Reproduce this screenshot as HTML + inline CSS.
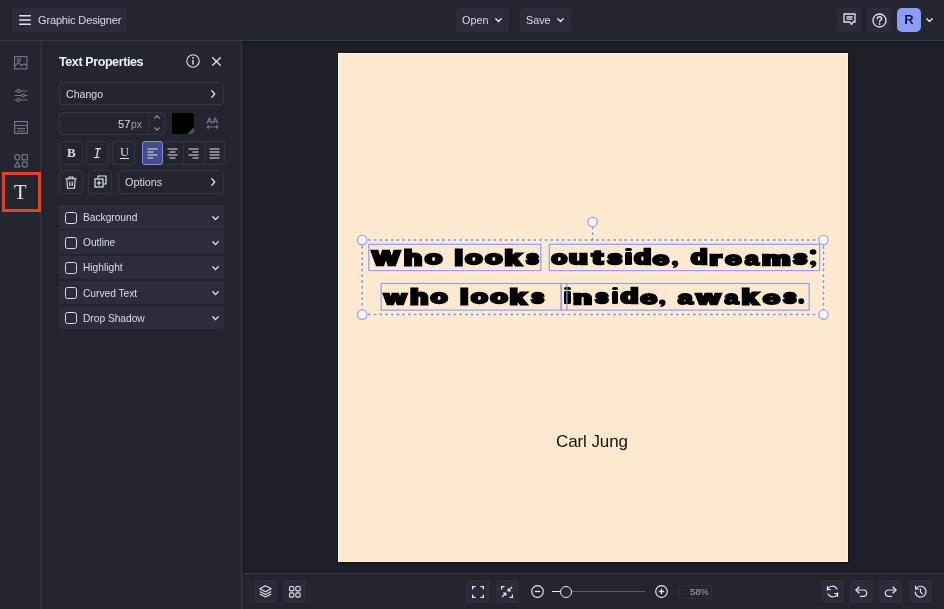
<!DOCTYPE html>
<html><head><meta charset="utf-8">
<style>
*{box-sizing:border-box;margin:0;padding:0}
html,body{-webkit-font-smoothing:antialiased;width:944px;height:609px;overflow:hidden;background:#1d1e27;font-family:"Liberation Sans",sans-serif;position:relative}
.abs{position:absolute}
#top{left:0;top:0;width:944px;height:41px;background:#23252f;border-bottom:1px solid #353744;box-shadow:0 2px 5px rgba(0,0,0,0.35)}
#rail{left:0;top:41px;width:42px;height:568px;background:#23252f;border-right:2px solid #2c2e3a}
#panel{left:42px;top:41px;width:200px;height:568px;background:#23252f;border-right:1px solid #353744}
#bottom{left:242px;top:573px;width:702px;height:36px;background:#23252f;border-top:1px solid #353744}
#canvas{left:338px;top:52.6px;width:509.7px;height:509px;background:#fde8d0;box-shadow:0 0 1.5px 0.5px #000, inset 0 0 0 1px #fff1e0}
.btn{position:absolute;background:#2a2c39;border-radius:2.5px}
.box{position:absolute;border:1px solid #31333f;border-radius:3px}
.g{position:absolute;left:0;top:0;transform-origin:0 0;font:700 19px "Liberation Sans",sans-serif;line-height:30px;-webkit-text-stroke:2.6px #000;color:#000;white-space:pre}
.lbl{position:absolute;will-change:transform;color:#dcdde5;white-space:nowrap}
svg{position:absolute;overflow:visible}
</style></head><body>
<div id="top" class="abs"></div>
<div id="rail" class="abs"></div>
<div id="panel" class="abs"></div>
<div id="bottom" class="abs"></div>
<div id="canvas" class="abs"></div>

<!-- top bar -->
<div class="btn" style="left:12px;top:8px;width:115px;height:24px"></div>
<svg style="left:19px;top:15px" width="12" height="10" viewBox="0 0 12 10"><g stroke="#e4e5ec" stroke-width="1.5" stroke-linecap="round"><path d="M0.75 0.75H11.25M0.75 5H11.25M0.75 9.25H11.25"/></g></svg>
<div class="lbl" style="left:38px;top:13px;font-size:11px;letter-spacing:-0.15px;line-height:14px">Graphic Designer</div>
<div class="btn" style="left:456px;top:8px;width:53px;height:24px"></div>
<div class="lbl" style="left:462px;top:13px;font-size:10.8px;line-height:14px">Open</div>
<svg style="left:495px;top:18px" width="7" height="5" viewBox="0 0 7 5"><path d="M0.8 0.8L3.5 3.6L6.2 0.8" fill="none" stroke="#e4e5ec" stroke-width="1.4" stroke-linecap="round" stroke-linejoin="round"/></svg>
<div class="btn" style="left:520px;top:8px;width:51px;height:24px"></div>
<div class="lbl" style="left:526px;top:13px;font-size:10.8px;line-height:14px">Save</div>
<svg style="left:557px;top:18px" width="7" height="5" viewBox="0 0 7 5"><path d="M0.8 0.8L3.5 3.6L6.2 0.8" fill="none" stroke="#e4e5ec" stroke-width="1.4" stroke-linecap="round" stroke-linejoin="round"/></svg>
<div class="btn" style="left:837px;top:8px;width:24px;height:24px"></div>
<svg style="left:843px;top:13px" width="13" height="13" viewBox="0 0 13 13"><path d="M1 1H12V9H10L8.5 11.5L7 9H1Z" fill="none" stroke="#e4e5ec" stroke-width="1.3" stroke-linejoin="round"/><path d="M3.5 4H9.5M3.5 6.2H9.5" stroke="#e4e5ec" stroke-width="1.3"/></svg>
<div class="btn" style="left:867px;top:8px;width:24px;height:24px"></div>
<svg style="left:871.5px;top:12.5px" width="15" height="15" viewBox="0 0 15 15"><circle cx="7.5" cy="7.5" r="6.5" fill="none" stroke="#e4e5ec" stroke-width="1.3"/><path d="M5.3 5.8C5.3 4.5 6.3 3.8 7.5 3.8C8.7 3.8 9.7 4.6 9.7 5.7C9.7 7.1 7.6 7.2 7.6 8.8" fill="none" stroke="#e4e5ec" stroke-width="1.4" stroke-linecap="round"/><circle cx="7.6" cy="11" r="0.9" fill="#e4e5ec"/></svg>
<div class="abs" style="left:897px;top:8px;width:24px;height:24px;background:#8e9cf7;border-radius:5px;color:#16193d;will-change:transform;font-weight:700;font-size:13px;line-height:24px;text-align:center">R</div>
<svg style="left:926px;top:17.5px" width="7" height="5" viewBox="0 0 7 5"><path d="M0.8 0.8L3.5 3.6L6.2 0.8" fill="none" stroke="#e4e5ec" stroke-width="1.4" stroke-linecap="round" stroke-linejoin="round"/></svg>

<!-- rail -->
<svg style="left:14px;top:56px" width="13.5" height="13.5" viewBox="0 0 14 14"><g fill="none" stroke="#727489" stroke-width="1.2"><rect x="0.6" y="0.6" width="12.8" height="12.8"/><path d="M0.6 10.5L4.5 7L8 10L10.5 8L13.4 10.5"/><circle cx="5" cy="4.2" r="1.6"/></g></svg>
<svg style="left:14px;top:89px" width="14" height="13" viewBox="0 0 14 13"><g fill="none" stroke="#727489" stroke-width="1.2"><path d="M0.5 2H3M6 2H13.5M0.5 6.5H7.5M10.5 6.5H13.5M0.5 11H3M6 11H13.5"/><circle cx="4.5" cy="2" r="1.5"/><circle cx="9" cy="6.5" r="1.5"/><circle cx="4.5" cy="11" r="1.5"/></g></svg>
<svg style="left:14px;top:121px" width="14" height="13" viewBox="0 0 14 13"><g fill="none" stroke="#727489" stroke-width="1.2"><rect x="0.6" y="0.6" width="12.8" height="11.8"/><path d="M0.6 4.5H13.4M3 7.5H11M3 10H11"/></g></svg>
<svg style="left:13.5px;top:154px" width="14" height="14" viewBox="0 0 14 14"><g fill="none" stroke="#727489" stroke-width="1.2"><circle cx="3.3" cy="3.3" r="2.6"/><rect x="8.2" y="0.7" width="5.2" height="5.2"/><path d="M3.3 7.8L6 12.8H0.6Z"/><circle cx="10.8" cy="10.5" r="2.6"/></g></svg>
<div class="abs" style="left:2px;top:172px;width:39px;height:40px;border:3px solid #e0412b"></div>
<div class="lbl" style="left:14px;top:181px;font-family:'Liberation Serif',serif;font-size:20.5px;line-height:22px;color:#e3e4ea">T</div>

<!-- panel -->
<div class="lbl" style="left:59px;top:54.5px;font-size:12.5px;font-weight:700;letter-spacing:-0.4px;line-height:15px;color:#f0f1f5">Text Properties</div>
<svg style="left:186px;top:54px" width="14" height="14" viewBox="0 0 14 14"><circle cx="7" cy="7" r="6.2" fill="none" stroke="#e4e5ec" stroke-width="1.1"/><path d="M7 6V10.5" stroke="#e4e5ec" stroke-width="1.4"/><circle cx="7" cy="3.9" r="0.9" fill="#e4e5ec"/></svg>
<svg style="left:212px;top:57px" width="9" height="9" viewBox="0 0 9 9"><path d="M0.7 0.7L8.3 8.3M8.3 0.7L0.7 8.3" stroke="#e4e5ec" stroke-width="1.3" stroke-linecap="round"/></svg>
<div class="box" style="left:59px;top:82px;width:165px;height:23px"></div>
<div class="lbl" style="left:66px;top:87px;font-size:10.6px;line-height:14px">Chango</div>
<svg style="left:210.5px;top:89.5px" width="5" height="8" viewBox="0 0 5 8"><path d="M0.8 0.8L3.8 4L0.8 7.2" fill="none" stroke="#e4e5ec" stroke-width="1.3" stroke-linecap="round" stroke-linejoin="round"/></svg>
<div class="box" style="left:59px;top:111.5px;width:106px;height:23.5px"></div>
<div class="abs" style="left:148px;top:112px;width:1px;height:22.5px;background:#30323e"></div>
<div class="lbl" style="left:117.5px;top:117px;font-size:11.2px;line-height:14px">57</div>
<div class="lbl" style="left:131px;top:117px;font-size:10.5px;line-height:14px;color:#9a9cab">px</div>
<svg style="left:153.5px;top:114.5px" width="6" height="4" viewBox="0 0 6 4"><path d="M0.7 3.2L3 0.9L5.3 3.2" fill="none" stroke="#9a9cab" stroke-width="1.1" stroke-linecap="round"/></svg>
<svg style="left:153.5px;top:127px" width="6" height="4" viewBox="0 0 6 4"><path d="M0.7 0.8L3 3.1L5.3 0.8" fill="none" stroke="#9a9cab" stroke-width="1.1" stroke-linecap="round"/></svg>
<div class="abs" style="left:172px;top:112.5px;width:22px;height:21.5px;background:#000;border-radius:2px;overflow:hidden"><div class="abs" style="right:0;bottom:0;width:0;height:0;border-left:7.5px solid transparent;border-bottom:7.5px solid #4a4c56"></div></div>
<svg style="left:206px;top:117px" width="13" height="12" viewBox="0 0 13 12"><g fill="none" stroke="#6c6e82" stroke-width="1.25" stroke-linejoin="round"><path d="M0.8 6.6L3.4 0.8L6 6.6M1.7 4.6H5.1M6.6 6.6L9.2 0.8L11.8 6.6M7.5 4.6H10.9"/><path d="M1.2 10H11.8M2.8 8.5L1.1 10L2.8 11.5M10.2 8.5L11.9 10L10.2 11.5" stroke-width="1.1"/></g></svg>
<!-- BIU -->
<div class="box" style="left:59px;top:141px;width:23.5px;height:24px"></div>
<div class="box" style="left:85.5px;top:141px;width:23px;height:24px"></div>
<div class="box" style="left:112px;top:141px;width:23px;height:24px"></div>
<div class="lbl" style="left:66.5px;top:146px;font-family:'Liberation Serif',serif;font-weight:700;font-size:13px;line-height:14px">B</div>
<div class="lbl" style="left:92.5px;top:146.5px;font-family:'Liberation Mono',monospace;font-style:italic;font-size:14px;line-height:14px">I</div>
<div class="lbl" style="left:119.5px;top:144.5px;font-family:'Liberation Serif',serif;font-size:12.5px;line-height:14px;text-decoration:underline;text-underline-offset:2px">U</div>
<div class="box" style="left:141.5px;top:141px;width:83px;height:24px"></div>
<div class="abs" style="left:182.5px;top:142px;width:1px;height:22px;background:#30323e"></div>
<div class="abs" style="left:203.5px;top:142px;width:1px;height:22px;background:#30323e"></div>
<div class="abs" style="left:141.5px;top:141px;width:21.5px;height:24px;background:#474b86;border:1.5px solid #7f87e0;border-radius:3px"></div>
<svg style="left:146.5px;top:147.5px" width="11" height="11" viewBox="0 0 11 11"><path d="M0.5 1H10.5M0.5 4H6.5M0.5 7H10.5M0.5 10H6.5" stroke="#dfe1f7" stroke-width="1.1"/></svg>
<svg style="left:167px;top:147.5px" width="11" height="11" viewBox="0 0 11 11"><path d="M0.5 1H10.5M2.5 4H8.5M0.5 7H10.5M2.5 10H8.5" stroke="#e4e5ec" stroke-width="1.1"/></svg>
<svg style="left:188px;top:147.5px" width="11" height="11" viewBox="0 0 11 11"><path d="M0.5 1H10.5M4.5 4H10.5M0.5 7H10.5M4.5 10H10.5" stroke="#e4e5ec" stroke-width="1.1"/></svg>
<svg style="left:208.5px;top:147.5px" width="11" height="11" viewBox="0 0 11 11"><path d="M0.5 1H10.5M0.5 4H10.5M0.5 7H10.5M0.5 10H10.5" stroke="#e4e5ec" stroke-width="1.1"/></svg>
<!-- row2 -->
<div class="box" style="left:59px;top:170px;width:23.5px;height:23.5px"></div>
<div class="box" style="left:88px;top:170px;width:24px;height:23.5px"></div>
<div class="box" style="left:118px;top:170px;width:106px;height:23.5px"></div>
<svg style="left:65px;top:175.5px" width="12" height="13" viewBox="0 0 12 13"><g fill="none" stroke="#e4e5ec" stroke-width="1.1"><path d="M0.5 2.8H11.5M4 2.8V1H8V2.8M1.8 2.8L2.5 12.2H9.5L10.2 2.8M4.8 5.5V10M7.2 5.5V10"/></g></svg>
<svg style="left:93.5px;top:175px" width="13" height="13" viewBox="0 0 13 13"><g fill="none" stroke="#e4e5ec" stroke-width="1.2"><path d="M4 3.5V1H12V9H9.5"/><rect x="1" y="4" width="8" height="8"/><path d="M5 5.8V10.2M2.8 8H7.2"/></g></svg>
<div class="lbl" style="left:124.5px;top:175px;font-size:10.8px;line-height:14px">Options</div>
<svg style="left:210.5px;top:178px" width="5" height="8" viewBox="0 0 5 8"><path d="M0.8 0.8L3.8 4L0.8 7.2" fill="none" stroke="#e4e5ec" stroke-width="1.3" stroke-linecap="round" stroke-linejoin="round"/></svg>
<!-- accordion -->
<div class="abs" style="left:59px;top:205px;width:165px;height:124px;background:#2b2d3b;border-radius:2px"></div>
<div class="abs" style="left:65px;top:211.8px;width:12px;height:12px;border:1.2px solid #d9dae2;border-radius:2.5px"></div>
<div class="lbl" style="left:82.5px;top:211.2px;font-size:10.2px;line-height:14px">Background</div>
<svg style="left:212px;top:215.8px" width="7" height="5" viewBox="0 0 7 5"><path d="M0.8 0.8L3.5 3.6L6.2 0.8" fill="none" stroke="#e4e5ec" stroke-width="1.3" stroke-linecap="round" stroke-linejoin="round"/></svg>
<div class="abs" style="left:59px;top:228.9px;width:165px;height:1.6px;background:#22242f"></div>
<div class="abs" style="left:65px;top:236.9px;width:12px;height:12px;border:1.2px solid #d9dae2;border-radius:2.5px"></div>
<div class="lbl" style="left:82.5px;top:236.3px;font-size:10.2px;line-height:14px">Outline</div>
<svg style="left:212px;top:240.9px" width="7" height="5" viewBox="0 0 7 5"><path d="M0.8 0.8L3.5 3.6L6.2 0.8" fill="none" stroke="#e4e5ec" stroke-width="1.3" stroke-linecap="round" stroke-linejoin="round"/></svg>
<div class="abs" style="left:59px;top:254.0px;width:165px;height:1.6px;background:#22242f"></div>
<div class="abs" style="left:65px;top:262.0px;width:12px;height:12px;border:1.2px solid #d9dae2;border-radius:2.5px"></div>
<div class="lbl" style="left:82.5px;top:261.4px;font-size:10.2px;line-height:14px">Highlight</div>
<svg style="left:212px;top:266.0px" width="7" height="5" viewBox="0 0 7 5"><path d="M0.8 0.8L3.5 3.6L6.2 0.8" fill="none" stroke="#e4e5ec" stroke-width="1.3" stroke-linecap="round" stroke-linejoin="round"/></svg>
<div class="abs" style="left:59px;top:279.1px;width:165px;height:1.6px;background:#22242f"></div>
<div class="abs" style="left:65px;top:287.1px;width:12px;height:12px;border:1.2px solid #d9dae2;border-radius:2.5px"></div>
<div class="lbl" style="left:82.5px;top:286.5px;font-size:10.2px;line-height:14px">Curved Text</div>
<svg style="left:212px;top:291.1px" width="7" height="5" viewBox="0 0 7 5"><path d="M0.8 0.8L3.5 3.6L6.2 0.8" fill="none" stroke="#e4e5ec" stroke-width="1.3" stroke-linecap="round" stroke-linejoin="round"/></svg>
<div class="abs" style="left:59px;top:304.2px;width:165px;height:1.6px;background:#22242f"></div>
<div class="abs" style="left:65px;top:312.2px;width:12px;height:12px;border:1.2px solid #d9dae2;border-radius:2.5px"></div>
<div class="lbl" style="left:82.5px;top:311.6px;font-size:10.2px;line-height:14px">Drop Shadow</div>
<svg style="left:212px;top:316.2px" width="7" height="5" viewBox="0 0 7 5"><path d="M0.8 0.8L3.5 3.6L6.2 0.8" fill="none" stroke="#e4e5ec" stroke-width="1.3" stroke-linecap="round" stroke-linejoin="round"/></svg>

<!-- canvas content -->
<div class="abs" style="left:556px;top:431px;font-size:17px;line-height:22px;color:#161412;will-change:transform;white-space:nowrap;letter-spacing:-0.1px">Carl Jung</div>
<svg style="left:0;top:0" width="944" height="609">
<g fill="none" stroke="#fff8f2" stroke-width="2.6" opacity="0.7">
<rect x="368.8" y="244.3" width="172" height="26.3"/>
<rect x="549.3" y="244.3" width="270.3" height="26.3"/>
<rect x="381.2" y="283.5" width="428" height="26.6"/>
<path d="M362.2 240.1H823.5M362.2 314.6H823.5M362.2 240.1V314.6M823.5 240.1V314.6M592.6 226.5V240.1"/>
</g>
<g fill="none" stroke="#979ee6" stroke-width="1.3">
<rect x="368.8" y="244.3" width="172" height="26.3"/>
<rect x="549.3" y="244.3" width="270.3" height="26.3"/>
<rect x="381.2" y="283.5" width="180" height="26.6"/>
<rect x="561.2" y="283.5" width="248" height="26.6"/>
</g>
<g fill="none" stroke="#8e93c6" stroke-width="1.5" stroke-dasharray="3 2.7">
<path d="M362.2 240.1H823.5M362.2 314.6H823.5M362.2 240.1V314.6M823.5 240.1V314.6M592.6 226.5V240.1"/>
</g>
<g fill="#f8f6fa" stroke="#a6abe4" stroke-width="1.4">
<circle cx="362.2" cy="240.1" r="4.7"/><circle cx="823.5" cy="240.1" r="4.7"/>
<circle cx="362.2" cy="314.6" r="4.7"/><circle cx="823.5" cy="314.6" r="4.7"/>
<circle cx="592.6" cy="222" r="4.7"/>
</g>
</svg>
<!--G--><div class="abs" style="left:624.70px;top:247.60px;width:7.30px;height:3.9px;background:#000;border-radius:3px/2px"></div><div class="abs" style="left:624.70px;top:252.40px;width:7.30px;height:12.50px;background:#000;border-radius:1.5px"></div><div class="abs" style="left:563.50px;top:286.60px;width:7.20px;height:3.9px;background:#000;border-radius:3px/2px"></div><div class="abs" style="left:563.50px;top:291.40px;width:7.20px;height:12.50px;background:#000;border-radius:1.5px"></div><div class="abs" style="left:611.50px;top:286.60px;width:6.80px;height:3.9px;background:#000;border-radius:3px/2px"></div><div class="abs" style="left:611.50px;top:291.40px;width:6.80px;height:12.50px;background:#000;border-radius:1.5px"></div><svg style="left:0;top:0" width="944" height="609"><g fill="#000"><path transform="translate(671.50 260.60) scale(1.000 0.987)" d="M3.5 0C5.5 0 6.8 1.3 6.8 3.1C6.8 5.1 5.4 6.8 1.8 7.5L1.2 6.5C2.3 6.1 3 5.6 3.2 5.1C1.4 5 0.2 4 0.2 2.6C0.2 1.1 1.6 0 3.5 0Z"/><path transform="translate(809.70 260.40) scale(0.985 1.013)" d="M3.5 0C5.5 0 6.8 1.3 6.8 3.1C6.8 5.1 5.4 6.8 1.8 7.5L1.2 6.5C2.3 6.1 3 5.6 3.2 5.1C1.4 5 0.2 4 0.2 2.6C0.2 1.1 1.6 0 3.5 0Z"/><ellipse cx="813.05" cy="251.90" rx="3.35" ry="2.6"/><path transform="translate(658.70 299.60) scale(1.000 0.987)" d="M3.5 0C5.5 0 6.8 1.3 6.8 3.1C6.8 5.1 5.4 6.8 1.8 7.5L1.2 6.5C2.3 6.1 3 5.6 3.2 5.1C1.4 5 0.2 4 0.2 2.6C0.2 1.1 1.6 0 3.5 0Z"/><ellipse cx="801.25" cy="301.15" rx="2.95" ry="2.8"/></g></svg><span class="g" style="transform:matrix(1.496,0,0,1.056,372.53,242.46);-webkit-text-stroke-width:2.6px">W</span><span class="g" style="transform:matrix(1.549,0,0,1.065,404.00,242.28)">h</span><span class="g" style="transform:matrix(1.481,0,0,0.946,425.04,244.56)">o</span><span class="g" style="transform:matrix(1.543,0,0,1.065,454.80,242.28)">l</span><span class="g" style="transform:matrix(1.473,0,0,0.946,465.34,244.56)">o</span><span class="g" style="transform:matrix(1.473,0,0,0.946,485.24,244.56)">o</span><span class="g" style="transform:matrix(1.516,0,0,1.065,504.70,242.28)">k</span><span class="g" style="transform:matrix(1.176,0,0,0.928,526.18,244.83);-webkit-text-stroke-width:2.8px">s</span><span class="g" style="transform:matrix(1.347,0,0,0.946,551.47,244.56)">o</span><span class="g" style="transform:matrix(1.608,0,0,0.955,569.00,244.36)">u</span><span class="g" style="transform:matrix(1.647,0,0,1.012,592.25,243.15)">t</span><span class="g" style="transform:matrix(1.347,0,0,0.928,607.85,244.83);-webkit-text-stroke-width:2.8px">s</span><span class="g" style="transform:matrix(1.453,0,0,1.048,634.13,242.36)">d</span><span class="g" style="transform:matrix(1.600,0,0,1.004,652.20,243.69);-webkit-text-stroke-width:1.8px">e</span><span class="g" style="transform:matrix(1.412,0,0,1.048,690.91,242.36)">d</span><span class="g" style="transform:matrix(1.600,0,0,0.965,709.50,244.40)">r</span><span class="g" style="transform:matrix(1.600,0,0,1.004,724.80,243.69);-webkit-text-stroke-width:1.8px">e</span><span class="g" style="transform:matrix(1.336,0,0,0.994,744.67,243.90);-webkit-text-stroke-width:2.0px">a</span><span class="g" style="transform:matrix(1.682,0,0,0.965,762.01,244.40)">m</span><span class="g" style="transform:matrix(1.282,0,0,0.928,793.58,244.83);-webkit-text-stroke-width:2.8px">s</span><span class="g" style="transform:matrix(1.461,0,0,0.984,384.57,282.99);-webkit-text-stroke-width:2.5px">w</span><span class="g" style="transform:matrix(1.549,0,0,1.065,410.20,281.28)">h</span><span class="g" style="transform:matrix(1.442,0,0,0.946,430.82,283.56)">o</span><span class="g" style="transform:matrix(1.524,0,0,1.065,460.20,281.28)">l</span><span class="g" style="transform:matrix(1.450,0,0,0.946,471.02,283.56)">o</span><span class="g" style="transform:matrix(1.481,0,0,0.946,490.54,283.56)">o</span><span class="g" style="transform:matrix(1.516,0,0,1.065,509.70,281.28)">k</span><span class="g" style="transform:matrix(1.176,0,0,0.928,531.58,283.83);-webkit-text-stroke-width:2.8px">s</span><span class="g" style="transform:matrix(1.600,0,0,0.965,573.20,283.40)">n</span><span class="g" style="transform:matrix(1.208,0,0,0.928,595.41,283.83);-webkit-text-stroke-width:2.8px">s</span><span class="g" style="transform:matrix(1.518,0,0,1.048,620.76,281.36)">d</span><span class="g" style="transform:matrix(1.636,0,0,1.004,639.90,282.69);-webkit-text-stroke-width:1.8px">e</span><span class="g" style="transform:matrix(1.427,0,0,0.994,677.71,282.90);-webkit-text-stroke-width:2.0px">a</span><span class="g" style="transform:matrix(1.578,0,0,0.984,696.76,282.99);-webkit-text-stroke-width:2.5px">w</span><span class="g" style="transform:matrix(1.328,0,0,0.994,724.56,282.90);-webkit-text-stroke-width:2.0px">a</span><span class="g" style="transform:matrix(1.516,0,0,1.065,741.70,281.28)">k</span><span class="g" style="transform:matrix(1.672,0,0,1.004,762.51,282.69);-webkit-text-stroke-width:1.8px">e</span><span class="g" style="transform:matrix(1.208,0,0,0.928,783.41,283.83);-webkit-text-stroke-width:2.8px">s</span><!--/G-->
<svg style="left:566px;top:283px" width="2" height="28" viewBox="0 0 2 28"><path d="M0.9 0.5V27.1" stroke="#8f96dd" stroke-width="1.2"/></svg>
<!-- bottom bar -->
<div class="btn" style="left:254px;top:580px;width:23px;height:23px"></div>
<div class="btn" style="left:283px;top:580px;width:23px;height:23px"></div>
<svg style="left:259px;top:585px" width="13" height="13" viewBox="0 0 13 13"><g fill="none" stroke="#e4e5ec" stroke-width="1.1" stroke-linejoin="round"><path d="M6.5 0.8L12.2 3.8L6.5 6.8L0.8 3.8Z"/><path d="M0.8 6.5L6.5 9.5L12.2 6.5"/><path d="M0.8 9L6.5 12L12.2 9"/></g></svg>
<svg style="left:289px;top:586px" width="12" height="12" viewBox="0 0 12 12"><g fill="none" stroke="#e4e5ec" stroke-width="1.1"><rect x="0.55" y="0.55" width="4.3" height="4.3" rx="1.1"/><rect x="6.85" y="0.55" width="4.3" height="4.3" rx="1.1"/><rect x="0.55" y="6.85" width="4.3" height="4.3" rx="1.1"/><rect x="6.85" y="6.85" width="4.3" height="4.3" rx="1.1"/></g></svg>
<div class="btn" style="left:466px;top:580px;width:23.5px;height:22.5px"></div>
<div class="btn" style="left:495.5px;top:580px;width:23.5px;height:22.5px"></div>
<svg style="left:472px;top:585.5px" width="12" height="12" viewBox="0 0 12 12"><g fill="none" stroke="#e4e5ec" stroke-width="1.2"><path d="M0.6 3.5V0.6H3.5M8.5 0.6H11.4V3.5M11.4 8.5V11.4H8.5M3.5 11.4H0.6V8.5"/></g></svg>
<svg style="left:501px;top:585.5px" width="12" height="12" viewBox="0 0 12 12"><g fill="none" stroke="#e4e5ec" stroke-width="1.2"><path d="M0.6 3.5V0.6H3.5M11.4 8.5V11.4H8.5"/><path d="M11 1L7.2 4.8M7.2 2.2V4.8H9.8M1 11L4.8 7.2M2.2 7.2H4.8V9.8"/></g></svg>
<svg style="left:530.5px;top:585px" width="13" height="13" viewBox="0 0 13 13"><circle cx="6.5" cy="6.5" r="5.8" fill="none" stroke="#e4e5ec" stroke-width="1.2"/><path d="M3.8 6.5H9.2" stroke="#e4e5ec" stroke-width="1.3"/></svg>
<svg style="left:654.5px;top:585.3px" width="13" height="13" viewBox="0 0 13 13"><circle cx="6.5" cy="6.5" r="5.8" fill="none" stroke="#e4e5ec" stroke-width="1.2"/><path d="M3.8 6.5H9.2M6.5 3.8V9.2" stroke="#e4e5ec" stroke-width="1.3"/></svg>
<div class="abs" style="left:552px;top:590.5px;width:93px;height:1.2px;background:#5b5d6e"></div>
<div class="abs" style="left:552px;top:590.5px;width:12px;height:1.5px;background:#e4e5ec"></div>
<div class="abs" style="left:559.5px;top:585.5px;width:12px;height:12px;border:1.6px solid #ecedf2;border-radius:50%;background:#252733"></div>
<div class="abs" style="left:678.5px;top:585px;width:33px;height:13.5px;border:1px solid #2f313d;border-radius:2px"></div>
<div class="lbl" style="left:690px;top:585.5px;font-size:9.6px;line-height:12px;color:#a5a7b5;letter-spacing:-0.2px">58%</div>
<div class="btn" style="left:821px;top:580px;width:22.5px;height:22.5px"></div>
<div class="btn" style="left:850px;top:580px;width:23px;height:22.5px"></div>
<div class="btn" style="left:879px;top:580px;width:23px;height:22.5px"></div>
<div class="btn" style="left:908.5px;top:580px;width:23px;height:22.5px"></div>
<svg style="left:825.5px;top:585px" width="13" height="13" viewBox="0 0 13 13"><g fill="none" stroke="#e4e5ec" stroke-width="1.2" stroke-linecap="round" stroke-linejoin="round"><path d="M1.2 5.2A5.3 5.3 0 0 1 11 4"/><path d="M11.8 7.8A5.3 5.3 0 0 1 2 9"/><path d="M1.5 1.5V4.5H4.5M11.5 11.5V8.5H8.5"/></g></svg>
<svg style="left:855px;top:586px" width="13" height="11" viewBox="0 0 13 11"><g fill="none" stroke="#e4e5ec" stroke-width="1.2" stroke-linecap="round" stroke-linejoin="round"><path d="M4 1L1 4L4 7"/><path d="M1 4H8.5A3.2 3.2 0 0 1 8.5 10.4H5.5"/></g></svg>
<svg style="left:884px;top:586px" width="13" height="11" viewBox="0 0 13 11"><g fill="none" stroke="#e4e5ec" stroke-width="1.2" stroke-linecap="round" stroke-linejoin="round"><path d="M9 1L12 4L9 7"/><path d="M12 4H4.5A3.2 3.2 0 0 0 4.5 10.4H7.5"/></g></svg>
<svg style="left:913.5px;top:585px" width="13" height="13" viewBox="0 0 13 13"><g fill="none" stroke="#e4e5ec" stroke-width="1.2" stroke-linecap="round" stroke-linejoin="round"><path d="M2.2 3.5A5.4 5.4 0 1 1 1.2 7"/><path d="M1.6 1V4H4.6"/><path d="M6.5 4V6.8L8.3 8.8"/></g></svg>
</body></html>
